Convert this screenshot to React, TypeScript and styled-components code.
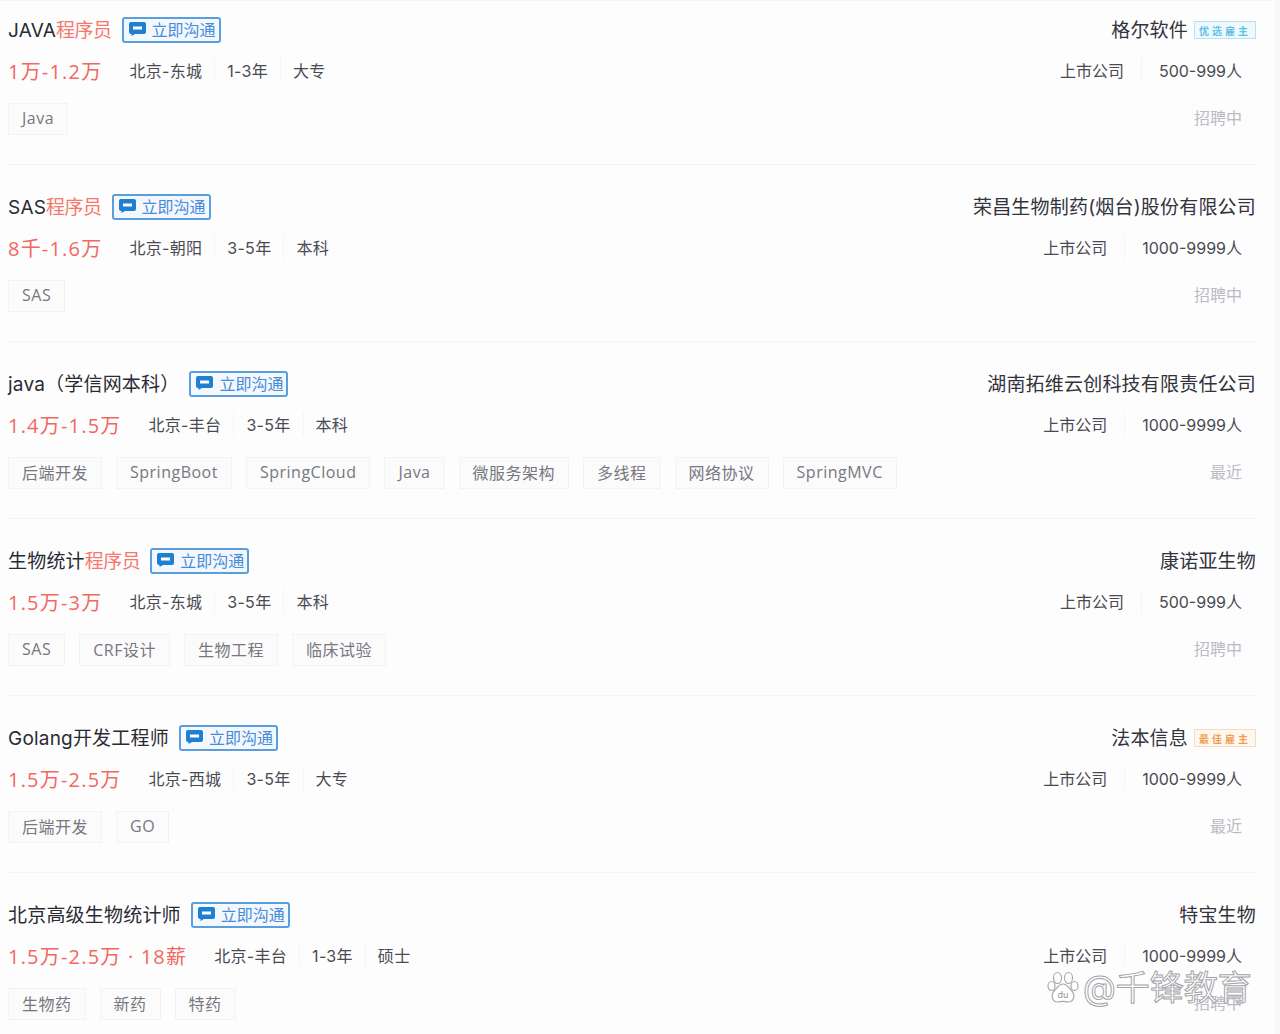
import React from "react";
import styled, {createGlobalStyle} from "styled-components";

const GlobalStyle = createGlobalStyle`
html, body {
margin: 0;
padding: 0;
background: #f7f8fa;
}
body {
font-family: Inter, "Noto Sans CJK SC", sans-serif;
}
`

const Page = styled.div`
position: relative;
width: 1275px;
height: 1034px;
overflow: hidden;
box-sizing: border-box;
padding: 0 19px 0 8px;
background: #fdfdfe;
border-top: 1px solid #f5f6f8;
`
const Row = styled.div`
display: grid;
grid-template-columns: 1fr auto;
padding: 29px 0;
height: 177px;
box-sizing: border-box;
border-bottom: 1px solid #f3f4f6;
&:first-child {
height: 164px;
padding-top: 16px;
}
`
const Left = styled.div`
display: flex;
flex-direction: column;
`
const Right = styled.div`
display: flex;
flex-direction: column;
align-items: flex-end;
`
const TitleLine = styled.div`
display: flex;
align-items: center;
height: 26px;
`
const Title = styled.span`
font-size: 19px;
line-height: 24px;
padding-top: 2px;
letter-spacing: 0.2px;
color: #2a2a33;
white-space: pre;
`
const Keyword = styled.span`
color: #f7776c;
letter-spacing: -0.5px;
`
const ChatButton = styled.span`
display: flex;
align-items: center;
gap: 6px;
width: 99px;
height: 26px;
box-sizing: border-box;
margin-left: 10px;
padding: 0 0 2px 5px;
border: 2px solid #5a9edc;
border-radius: 3px;
background: #f2f8fe;
color: #4a8bd8;
font-size: 16px;
white-space: nowrap;
`
const InfoLine = styled.div`
display: flex;
align-items: center;
height: 28px;
margin-top: 14px;
padding-bottom: 2px;
box-sizing: border-box;
`
const Salary = styled.span`
font-family: "Open Sans", "Noto Sans CJK SC", sans-serif;
font-size: 20px;
letter-spacing: 1.2px;
color: #f2675f;
margin-right: 15px;
white-space: nowrap;
`
const Meta = styled.span`
font-size: 16px;
letter-spacing: 0.3px;
color: #4a4a52;
padding: 0 12px;
white-space: nowrap;
& + & {
border-left: 1px solid #f4f4f6;
}
`
const CompanyMeta = styled(Meta)`
padding: 0 17px;
letter-spacing: 0;
&:last-child {
padding-right: 14px;
}
`
const TagLine = styled.div`
display: flex;
gap: 14px;
margin-top: 18px;
`
const Tag = styled.span`
display: flex;
align-items: center;
height: 32px;
box-sizing: border-box;
padding: 0 13px 3px;
border: 1px solid #f3f3f5;
background: #fbfbfc;
color: #77777f;
font-family: "Open Sans", "Noto Sans CJK SC", sans-serif;
font-size: 16px;
letter-spacing: 0.5px;
white-space: nowrap;
`
const Company = styled.span`
font-size: 19px;
line-height: 24px;
padding-top: 2px;
letter-spacing: 0.2px;
color: #33333b;
white-space: nowrap;
`
const Badge = styled.span<{$tone: "blue" | "orange"}>`
display: flex;
align-items: center;
justify-content: center;
width: 62px;
height: 18px;
box-sizing: border-box;
margin-left: 6px;
border: 1px solid ${p => p.$tone === "blue" ? "#b5e2f6" : "#f8dcbc"};
background: ${p => p.$tone === "blue" ? "#eef9fe" : "#fef7ee"};
color: ${p => p.$tone === "blue" ? "#62bfe8" : "#ee9f52"};
font-size: 10px;
font-weight: 700;
letter-spacing: 3px;
white-space: nowrap;
`
const Status = styled.div`
display: flex;
align-items: center;
height: 32px;
box-sizing: border-box;
margin-top: 18px;
padding: 0 14px 4px 0;
color: #bbbbc2;
font-size: 16px;
`
const Watermark = styled.div`
position: absolute;
left: 1047px;
top: 965px;
display: flex;
align-items: center;
gap: 4px;
color: rgba(255, 255, 255, 0.8);
-webkit-text-stroke: 1px #a4a4a8;
font-size: 34px;
line-height: 44px;
white-space: nowrap;
`

function ChatIcon() {
    return (
        <svg width="17" height="14" viewBox="0 0 17 14">
            <path d="M2 0h13a2 2 0 0 1 2 2v8a2 2 0 0 1-2 2H6l-3.5 2v-2H2a2 2 0 0 1-2-2V2a2 2 0 0 1 2-2z" fill="#1f7fd0"/>
            <rect x="4" y="4.5" width="9" height="3" fill="#fff"/>
        </svg>
    )
}

function BaiduPaw() {
    return (
        <svg width="32" height="34" viewBox="0 0 32 34" fill="#fff" stroke="#a9a9ad" strokeWidth="1.2">
            <ellipse cx="10.5" cy="7" rx="4" ry="5.5"/>
            <ellipse cx="21.5" cy="7" rx="4" ry="5.5"/>
            <ellipse cx="4.5" cy="15" rx="3.5" ry="4.5"/>
            <ellipse cx="27.5" cy="15" rx="3.5" ry="4.5"/>
            <path d="M16 13c4 0 5 3 8 6 5 5 3 12-3 12-2 0-3-.6-5-.6s-3 .6-5 .6c-6 0-8-7-3-12 3-3 4-6 8-6z"/>
            <text x="16" y="27" fontSize="9" fill="#8f8f94" stroke="none" textAnchor="middle">du</text>
        </svg>
    )
}

interface Job {
    name: string
    keyword?: string
    salary: string
    meta: string[]
    tags: string[]
    company: string
    badge?: {text: string, tone: "blue" | "orange"}
    kind: string
    size: string
    status: string
}

const jobs: Job[] = [
    {name: "JAVA", keyword: "程序员", salary: "1万-1.2万", meta: ["北京-东城", "1-3年", "大专"], tags: ["Java"],
        company: "格尔软件", badge: {text: "优选雇主", tone: "blue"}, kind: "上市公司", size: "500-999人", status: "招聘中"},
    {name: "SAS", keyword: "程序员", salary: "8千-1.6万", meta: ["北京-朝阳", "3-5年", "本科"], tags: ["SAS"],
        company: "荣昌生物制药(烟台)股份有限公司", kind: "上市公司", size: "1000-9999人", status: "招聘中"},
    {name: "java（学信网本科）", salary: "1.4万-1.5万", meta: ["北京-丰台", "3-5年", "本科"],
        tags: ["后端开发", "SpringBoot", "SpringCloud", "Java", "微服务架构", "多线程", "网络协议", "SpringMVC"],
        company: "湖南拓维云创科技有限责任公司", kind: "上市公司", size: "1000-9999人", status: "最近"},
    {name: "生物统计", keyword: "程序员", salary: "1.5万-3万", meta: ["北京-东城", "3-5年", "本科"],
        tags: ["SAS", "CRF设计", "生物工程", "临床试验"],
        company: "康诺亚生物", kind: "上市公司", size: "500-999人", status: "招聘中"},
    {name: "Golang开发工程师", salary: "1.5万-2.5万", meta: ["北京-西城", "3-5年", "大专"], tags: ["后端开发", "GO"],
        company: "法本信息", badge: {text: "最佳雇主", tone: "orange"}, kind: "上市公司", size: "1000-9999人", status: "最近"},
    {name: "北京高级生物统计师", salary: "1.5万-2.5万 · 18薪", meta: ["北京-丰台", "1-3年", "硕士"],
        tags: ["生物药", "新药", "特药"],
        company: "特宝生物", kind: "上市公司", size: "1000-9999人", status: "招聘中"},
]

function JobRow({job}: {job: Job}) {
    return (
        <Row>
            <Left>
                <TitleLine>
                    <Title>{job.name}{job.keyword && <Keyword>{job.keyword}</Keyword>}</Title>
                    <ChatButton><ChatIcon/>立即沟通</ChatButton>
                </TitleLine>
                <InfoLine>
                    <Salary>{job.salary}</Salary>
                    {job.meta.map(m => <Meta key={m}>{m}</Meta>)}
                </InfoLine>
                <TagLine>
                    {job.tags.map(t => <Tag key={t}>{t}</Tag>)}
                </TagLine>
            </Left>
            <Right>
                <TitleLine>
                    <Company>{job.company}</Company>
                    {job.badge && <Badge $tone={job.badge.tone}>{job.badge.text}</Badge>}
                </TitleLine>
                <InfoLine>
                    <CompanyMeta>{job.kind}</CompanyMeta>
                    <CompanyMeta>{job.size}</CompanyMeta>
                </InfoLine>
                <Status>{job.status}</Status>
            </Right>
        </Row>
    )
}

export default function App() {
    return (
        <Page>
            <GlobalStyle/>
            {jobs.map(job => <JobRow key={job.company} job={job}/>)}
            <Watermark><BaiduPaw/>@千锋教育</Watermark>
        </Page>
    )
}
